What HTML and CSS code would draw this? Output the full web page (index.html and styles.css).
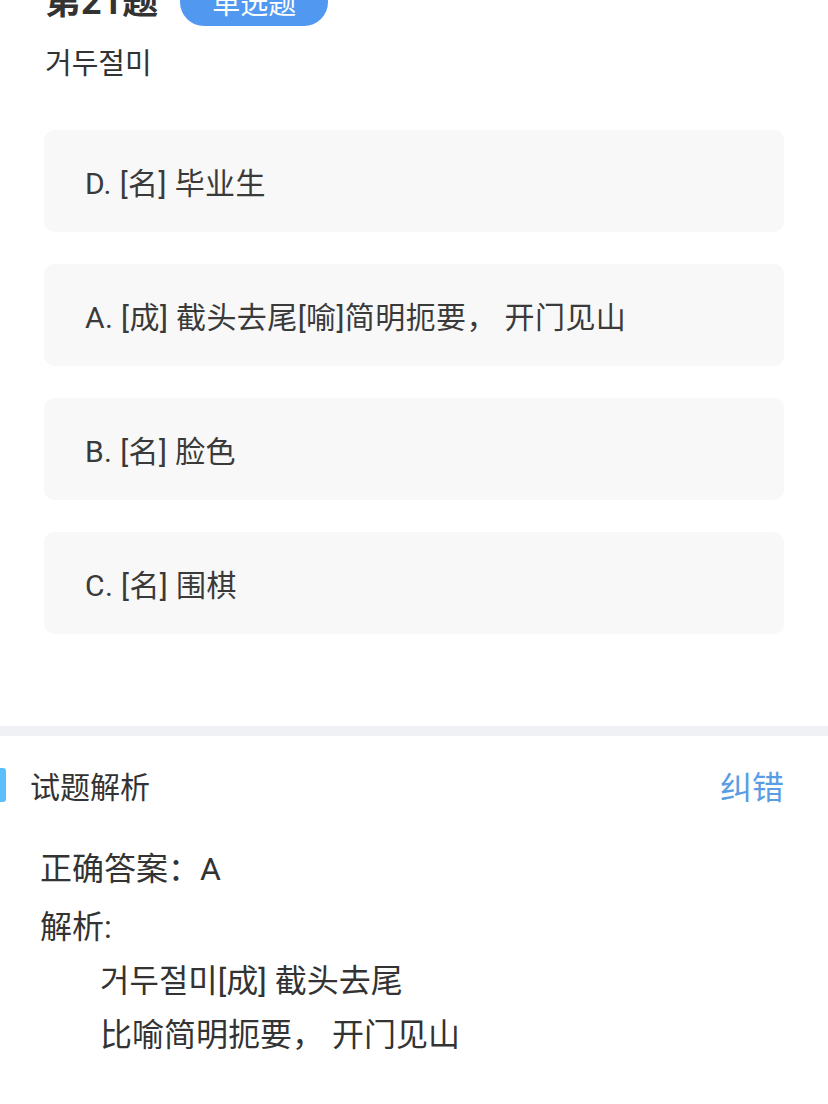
FILE: index.html
```html
<!DOCTYPE html>
<html lang="zh-CN">
<head>
<meta charset="utf-8">
<title>第21题</title>
<link rel="stylesheet" href="styles.css">
</head>
<body>
<div class="question">
  <div class="q-head">
    <span class="q-no">第21题</span>
    <span class="q-type">单选题</span>
  </div>
  <div class="q-stem">거두절미</div>
  <div class="options">
    <div class="option">D. [名] 毕业生</div>
    <div class="option">A. [成] 截头去尾[喻]简明扼要， 开门见山</div>
    <div class="option">B. [名] 脸色</div>
    <div class="option">C. [名] 围棋</div>
  </div>
</div>
<div class="divider"></div>
<div class="analysis">
  <div class="a-head">
    <div class="a-title"><span class="a-bar"></span>试题解析</div>
    <div class="a-report">纠错</div>
  </div>
  <div class="a-body">
    <div class="a-answer">正确答案：A</div>
    <div class="a-label">解析:</div>
    <div class="a-text">
      <div>거두절미[成] 截头去尾</div>
      <div>比喻简明扼要， 开门见山</div>
    </div>
  </div>
</div>
</body>
</html>
```

FILE: styles.css
```css
html, body {
  margin: 0;
  padding: 0;
  background: #ffffff;
}
body {
  font-family: Roboto, "Noto Sans CJK SC", "Noto Sans CJK KR", sans-serif;
  color: #333333;
  width: 828px;
  overflow: hidden;
}
.question {
  padding: 0 44px 0 44px;
}
.q-head {
  display: flex;
  align-items: center;
  gap: 22px;
  margin-top: -22px;
  height: 48px;
  padding-left: 1px;
}
.q-no {
  font-size: 36px;
  font-weight: 700;
  color: #333333;
  line-height: 48px;
}
.q-type {
  display: inline-flex;
  align-items: center;
  height: 48px;
  padding: 0 32px;
  border-radius: 24px;
  background: #5199f0;
  color: #ffffff;
  font-size: 28px;
}
.q-stem {
  font-size: 29px;
  line-height: 40px;
  margin-top: 18px;
  padding-left: 1px;
  color: #333333;
}
.options {
  display: flex;
  flex-direction: column;
  gap: 32px;
  margin-top: 46px;
}
.option {
  height: 102px;
  display: flex;
  align-items: center;
  padding-left: 41px;
  background: #f8f8f8;
  border-radius: 10px;
  font-size: 30px;
  letter-spacing: 0.4px;
  color: #3a3a3a;
}
.divider {
  height: 10px;
  background: #f0f1f4;
  margin-top: 92px;
}
.a-head {
  display: flex;
  justify-content: space-between;
  align-items: center;
  margin-top: 32px;
  height: 34px;
  padding-right: 44px;
}
.a-title {
  display: flex;
  align-items: center;
  font-size: 30px;
  color: #333333;
}
.a-bar {
  width: 6px;
  height: 34px;
  background: #5ebdfb;
  border-radius: 0 3px 3px 0;
  margin-right: 24px;
}
.a-report {
  font-size: 32px;
  color: #5a9de2;
}
.a-body {
  padding-left: 40px;
  margin-top: 38px;
}
.a-answer {
  font-size: 32px;
  line-height: 58px;
  color: #333333;
}
.a-label {
  font-size: 32px;
  line-height: 58px;
  color: #333333;
}
.a-text {
  padding-left: 60px;
  font-size: 32px;
  line-height: 54px;
  color: #333333;
  margin-top: -2px;
}
```
